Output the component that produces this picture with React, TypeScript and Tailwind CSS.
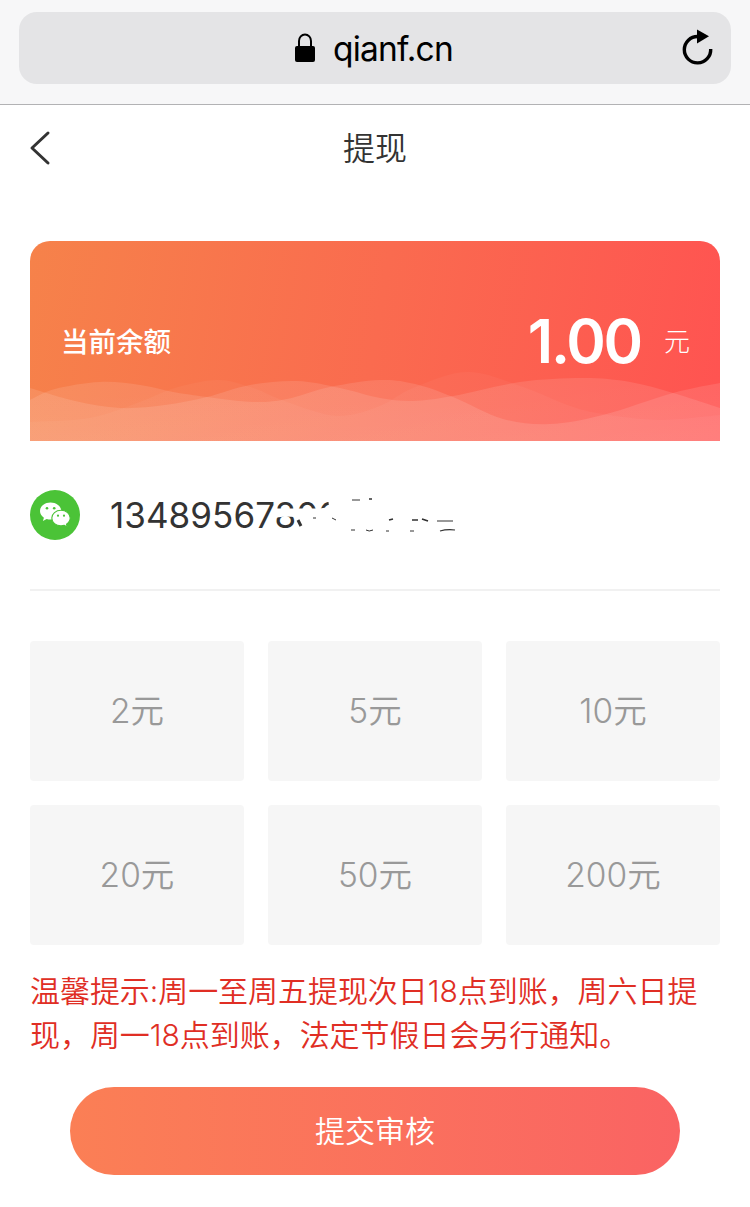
import React from "react";

type Point = [number, number];

// Smooth curve through the points, closed along the bottom of the card.
function wave(points: Point[]): string {
  let d = `M${points[0][0]},${points[0][1]}`;
  for (let i = 0; i < points.length - 1; i++) {
    const p0 = points[Math.max(0, i - 1)];
    const p1 = points[i];
    const p2 = points[i + 1];
    const p3 = points[Math.min(points.length - 1, i + 2)];
    d += ` C${p1[0] + (p2[0] - p0[0]) / 6},${p1[1] + (p2[1] - p0[1]) / 6} ${p2[0] - (p3[0] - p1[0]) / 6},${p2[1] - (p3[1] - p1[1]) / 6} ${p2[0]},${p2[1]}`;
  }
  return `${d} V200 H0 Z`;
}

const waves: { opacity: number; points: Point[] }[] = [
  { opacity: 0.12, points: [[0, 147], [45, 160], [90, 167], [135, 164], [177, 156], [220, 144], [267, 140], [310, 147], [350, 157], [383, 160], [423, 155], [490, 141], [553, 137], [600, 141], [643, 152], [690, 167]] },
  { opacity: 0.12, points: [[0, 159], [25, 148], [70, 141], [110, 144], [143, 151], [177, 156], [223, 161], [257, 158], [300, 146], [350, 139], [385, 143], [423, 156], [473, 178], [520, 183], [573, 174], [643, 152], [690, 142]] },
  { opacity: 0.04, points: [[0, 181], [60, 177], [110, 161], [145, 147], [187, 139], [220, 146], [257, 161], [307, 175], [350, 165], [383, 147], [437, 131], [490, 145], [540, 165], [573, 173], [630, 179], [690, 174]] },
];

const amounts = ["2元", "5元", "10元", "20元", "50元", "200元"];

function BrowserBar() {
  return (
    <div className="h-[105px] border-b border-[#b2b2b4] bg-[#f7f7f8] px-[19px] pt-3">
      <div className="flex h-[72px] items-center rounded-[18px] bg-[#e4e4e6] pr-[18px] text-black">
        <div className="flex flex-1 items-center justify-center pl-[47px]">
          <svg width="22" height="30" viewBox="0 0 22 30" className="mr-[17px]">
            <path d="M5 14V8a6 6.5 0 0 1 12 0v6" fill="none" stroke="currentColor" strokeWidth="2" />
            <rect x="1" y="13" width="20" height="16" rx="2" fill="currentColor" />
          </svg>
          <span className="pt-[3px] text-[33.5px] leading-none font-normal tracking-[-0.8px]">qianf.cn</span>
        </div>
        <svg width="32" height="38" viewBox="0 0 32 38">
          <path d="M17 7.5A13.2 13.2 0 1 0 29.7 20" fill="none" stroke="currentColor" strokeWidth="3.4" />
          <path d="M16 0.5L28 7.2L16 14.5Z" fill="currentColor" />
        </svg>
      </div>
    </div>
  );
}

function WechatIcon() {
  return (
    <svg width="50" height="50" viewBox="0 0 50 50">
      <circle cx="25" cy="25" r="25" fill="#4bc337" />
      <path d="M20.5 12.5c-6 0-10.5 3.8-10.5 8.6 0 2.8 1.5 5 3.9 6.6l-1 3.3 3.8-2c1.2.3 2.4.6 3.8.6 6 0 10.8-3.7 10.8-8.5s-4.8-8.6-10.8-8.6Z" fill="#fff" />
      <path d="M31 20.3c-5.2 0-9.2 3.5-9.2 7.8s4 7.8 9.2 7.8c1.2 0 2.3-.2 3.3-.5l3 1.7-.8-2.9c2.3-1.5 3.7-3.6 3.7-6.1 0-4.3-4-7.8-9.2-7.8Z" fill="#fff" stroke="#4bc337" strokeWidth="1.1" />
      <g fill="#4bc337">
        <circle cx="17" cy="18.2" r="1.3" />
        <circle cx="24.2" cy="18.2" r="1.3" />
        <circle cx="28" cy="25.7" r="1.1" />
        <circle cx="34" cy="25.7" r="1.1" />
      </g>
    </svg>
  );
}

export default function App() {
  return (
    <div className="min-h-[1207px] w-[750px] bg-white font-['Inter','Noto_Sans_CJK_SC',sans-serif] font-[350] text-[#333]">
      <BrowserBar />
      <header className="grid h-[86px] grid-cols-[80px_1fr_80px] items-center">
        <svg width="24" height="36" viewBox="0 0 24 36" className="ml-7">
          <path d="M20 3L4 18L20 33" fill="none" stroke="#333" strokeWidth="3" strokeLinecap="round" strokeLinejoin="round" />
        </svg>
        <h1 className="pt-0.5 text-center text-[32px] leading-none font-[350]">提现</h1>
      </header>

      <main className="px-[30px] pt-[50px]">
        <section className="relative h-[200px] overflow-hidden rounded-t-[20px] bg-[linear-gradient(100deg,#f6824a_0%,#fa6b4f_50%,#ff5351_100%)] text-white">
          <svg className="absolute inset-0" width="690" height="200" viewBox="0 0 690 200">
            <defs>
              <linearGradient id="wave" x1="0" y1="130" x2="0" y2="200" gradientUnits="userSpaceOnUse">
                <stop offset="0" stopColor="#fff" stopOpacity="0.85" />
                <stop offset="1" stopColor="#fff" />
              </linearGradient>
            </defs>
            {waves.map((w, i) => (
              <path key={i} d={wave(w.points)} fill="url(#wave)" opacity={w.opacity} />
            ))}
          </svg>
          <div className="relative flex h-full items-center justify-between pr-[30px] pl-[31px]">
            <span className="pt-[3px] text-[27.5px] font-medium">当前余额</span>
            <div className="flex items-center">
              <span className="text-[60px] leading-none font-[560] tracking-[-2.2px]">1.00</span>
              <span className="ml-[23px] text-[26px] font-light">元</span>
            </div>
          </div>
        </section>

        <section className="flex h-[150px] items-center border-b-2 border-[#f1f1f1]">
          <WechatIcon />
          <div className="relative ml-[29px] text-[35px] leading-[50px]">
            <span className="pl-px font-[370] tracking-[0.05px]">13489567800</span>
            <svg className="absolute top-0 left-0" width="360" height="50" viewBox="109 490 360 50">
              <path d="M273 508.500H296V517L285 516.500L273 518Z" fill="#fff" />
              <path d="M295.500 508.500H320L329 507L328 497H350V540H295.500Z" fill="#fff" />
              <g fill="none" stroke="#333" strokeWidth="1.5">
                <path d="M298 520L301 526" strokeWidth="3" />
                <path d="M313 518h3M332 518l4 2M352 500h8M351 530h4M366 530q3 2 7 0M386 531h3M410 531h4" strokeWidth="1" />
                <path d="M389 520l4-1M412 520h6M422 519l6 2M369 499h3" strokeWidth="1.7" />
                <path d="M437 521h16M440 531q7-2 15-1" strokeWidth="1.2" />
              </g>
            </svg>
          </div>
        </section>

        <section className="mt-[50px] grid grid-cols-3 gap-6">
          {amounts.map((amount) => (
            <button key={amount} className="h-[140px] rounded bg-[#f6f6f6] text-[33.5px] text-[#999]">
              {amount}
            </button>
          ))}
        </section>

        <p className="mt-6 text-[30px] leading-[44px] tracking-[-0.05px] text-[#e02e24]">
          <span className="block whitespace-nowrap">温馨提示:周一至周五提现次日18点到账，周六日提</span>
          <span className="block whitespace-nowrap">现，周一18点到账，法定节假日会另行通知。</span>
        </p>

        <button className="mx-10 mt-[30px] h-[88px] w-[610px] rounded-full bg-linear-to-r from-[#fb7f55] to-[#fa6363] text-[30px] text-white">
          提交审核
        </button>
      </main>
    </div>
  );
}
